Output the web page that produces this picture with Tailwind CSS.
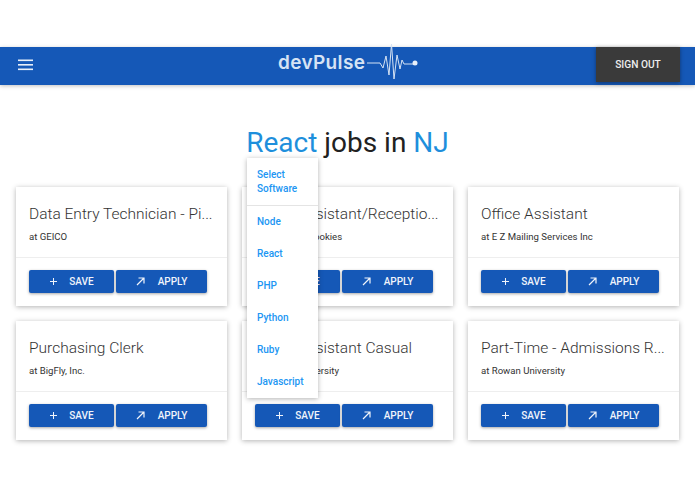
<!DOCTYPE html>
<html lang="en">
<head>
  <meta charset="UTF-8">
  <title>devPulse</title>
  <meta name="viewport" content="width=device-width, initial-scale=1.0">
  <script src="https://cdn.jsdelivr.net/npm/@tailwindcss/browser@4"></script>
</head>
<body class="bg-white font-['Roboto',sans-serif] text-[#212121] overflow-hidden">
  <div class="relative h-[494px] w-[695px] pt-[47px]">
    <!-- Header -->
    <header class="relative flex h-[38px] items-center justify-between bg-[#1558b7] pl-[18px] pr-[15px] shadow-[0_1px_4px_rgba(0,0,0,0.25)]">
      <svg class="mt-[-2px] h-[12px] w-[15px]" viewBox="0 0 15 12" fill="#e8eff9">
        <rect y="0.500" width="15" height="1.600"/>
        <rect y="5" width="15" height="1.600"/>
        <rect y="9.500" width="15" height="1.600"/>
      </svg>
      <div class="absolute left-[278px] top-[-4px] flex items-center">
        <span class="font-['Inter',sans-serif] text-[19px] font-semibold leading-[34px] tracking-[0.35px] text-[#d6e3f4]">devPulse</span>
        <svg class="ml-[2px] h-[40px] w-[52px]" viewBox="0 0 52 40" fill="none" stroke="#d6e3f4" stroke-width="1">
          <path d="M0 20H13L16 25L19 13L22 32L24.500 1L27 36L30 12L33 26L35 17L37 21H48"/>
          <circle cx="48" cy="20" r="2.500" fill="#e8eff9" stroke="none"/>
        </svg>
      </div>
      <button class="flex h-[35px] w-[84px] items-center justify-center self-start bg-[#3a3a3a] text-[10.200px] font-medium text-[#eeeeee] shadow-[0_1px_4px_rgba(0,0,0,0.4)]">SIGN OUT</button>
    </header>

    <!-- Heading -->
    <h1 class="mt-[40px] text-center text-[28px] leading-[36px]"><span class="text-[#1e8fdc]">React</span> jobs in <span class="text-[#1e8fdc]">NJ</span></h1>

    <!-- Job cards -->
    <main class="mt-[26px] grid grid-cols-3 gap-[15px] px-[16px]">
      <article class="h-[119px] bg-white shadow-[0_1px_5px_rgba(0,0,0,0.3)]">
        <div class="h-[71px] border-b border-[#eeeeee] px-[13px] pt-[17px]">
          <h2 class="truncate text-[15.500px] font-light leading-[21px] text-[#333333]">Data Entry Technician - Pi...</h2>
          <p class="mt-[5px] text-[9.600px] leading-[14px] text-[#333333]">at GEICO</p>
        </div>
        <div class="flex gap-[2px] pl-[13px] pt-[12px]">
          <button class="flex h-[23px] w-[85px] items-center justify-center gap-[11px] rounded-[2px] bg-[#1558b7] text-[10px] font-medium text-[#f0f4fb] shadow-[0_1px_3px_rgba(0,0,0,0.35)]">
            <svg class="h-[9px] w-[9px]" viewBox="0 0 9 9" stroke="#f0f4fb" stroke-width="1"><path d="M4.500 1V8M1 4.500H8"/></svg>SAVE
          </button>
          <button class="flex h-[23px] w-[91px] items-center justify-center gap-[13px] rounded-[2px] bg-[#1558b7] text-[10px] font-medium text-[#f0f4fb] shadow-[0_1px_3px_rgba(0,0,0,0.35)]">
            <svg class="h-[9px] w-[9px]" viewBox="0 0 9 9" fill="none" stroke="#f0f4fb" stroke-width="1.200"><path d="M1 8L8 1M2.500 1H8V6.500"/></svg>APPLY
          </button>
        </div>
      </article>

      <article class="h-[119px] bg-white shadow-[0_1px_5px_rgba(0,0,0,0.3)]">
        <div class="h-[71px] border-b border-[#eeeeee] px-[13px] pt-[17px]">
          <h2 class="truncate text-[15.500px] font-light leading-[21px] text-[#333333]">Office Assistant/Receptio...</h2>
          <p class="mt-[5px] text-[9.600px] leading-[14px] text-[#333333]">at Insomnia Cookies</p>
        </div>
        <div class="flex gap-[2px] pl-[13px] pt-[12px]">
          <button class="flex h-[23px] w-[85px] items-center justify-center gap-[11px] rounded-[2px] bg-[#1558b7] text-[10px] font-medium text-[#f0f4fb] shadow-[0_1px_3px_rgba(0,0,0,0.35)]">
            <svg class="h-[9px] w-[9px]" viewBox="0 0 9 9" stroke="#f0f4fb" stroke-width="1"><path d="M4.500 1V8M1 4.500H8"/></svg>SAVE
          </button>
          <button class="flex h-[23px] w-[91px] items-center justify-center gap-[13px] rounded-[2px] bg-[#1558b7] text-[10px] font-medium text-[#f0f4fb] shadow-[0_1px_3px_rgba(0,0,0,0.35)]">
            <svg class="h-[9px] w-[9px]" viewBox="0 0 9 9" fill="none" stroke="#f0f4fb" stroke-width="1.200"><path d="M1 8L8 1M2.500 1H8V6.500"/></svg>APPLY
          </button>
        </div>
      </article>

      <article class="h-[119px] bg-white shadow-[0_1px_5px_rgba(0,0,0,0.3)]">
        <div class="h-[71px] border-b border-[#eeeeee] px-[13px] pt-[17px]">
          <h2 class="truncate text-[15.500px] font-light leading-[21px] text-[#333333]">Office Assistant</h2>
          <p class="mt-[5px] text-[9.600px] leading-[14px] text-[#333333]">at E Z Mailing Services Inc</p>
        </div>
        <div class="flex gap-[2px] pl-[13px] pt-[12px]">
          <button class="flex h-[23px] w-[85px] items-center justify-center gap-[11px] rounded-[2px] bg-[#1558b7] text-[10px] font-medium text-[#f0f4fb] shadow-[0_1px_3px_rgba(0,0,0,0.35)]">
            <svg class="h-[9px] w-[9px]" viewBox="0 0 9 9" stroke="#f0f4fb" stroke-width="1"><path d="M4.500 1V8M1 4.500H8"/></svg>SAVE
          </button>
          <button class="flex h-[23px] w-[91px] items-center justify-center gap-[13px] rounded-[2px] bg-[#1558b7] text-[10px] font-medium text-[#f0f4fb] shadow-[0_1px_3px_rgba(0,0,0,0.35)]">
            <svg class="h-[9px] w-[9px]" viewBox="0 0 9 9" fill="none" stroke="#f0f4fb" stroke-width="1.200"><path d="M1 8L8 1M2.500 1H8V6.500"/></svg>APPLY
          </button>
        </div>
      </article>

      <article class="h-[119px] bg-white shadow-[0_1px_5px_rgba(0,0,0,0.3)]">
        <div class="h-[71px] border-b border-[#eeeeee] px-[13px] pt-[17px]">
          <h2 class="truncate text-[15.500px] font-light leading-[21px] text-[#333333]">Purchasing Clerk</h2>
          <p class="mt-[5px] text-[9.600px] leading-[14px] text-[#333333]">at BigFly, Inc.</p>
        </div>
        <div class="flex gap-[2px] pl-[13px] pt-[12px]">
          <button class="flex h-[23px] w-[85px] items-center justify-center gap-[11px] rounded-[2px] bg-[#1558b7] text-[10px] font-medium text-[#f0f4fb] shadow-[0_1px_3px_rgba(0,0,0,0.35)]">
            <svg class="h-[9px] w-[9px]" viewBox="0 0 9 9" stroke="#f0f4fb" stroke-width="1"><path d="M4.500 1V8M1 4.500H8"/></svg>SAVE
          </button>
          <button class="flex h-[23px] w-[91px] items-center justify-center gap-[13px] rounded-[2px] bg-[#1558b7] text-[10px] font-medium text-[#f0f4fb] shadow-[0_1px_3px_rgba(0,0,0,0.35)]">
            <svg class="h-[9px] w-[9px]" viewBox="0 0 9 9" fill="none" stroke="#f0f4fb" stroke-width="1.200"><path d="M1 8L8 1M2.500 1H8V6.500"/></svg>APPLY
          </button>
        </div>
      </article>

      <article class="h-[119px] bg-white shadow-[0_1px_5px_rgba(0,0,0,0.3)]">
        <div class="h-[71px] border-b border-[#eeeeee] px-[13px] pt-[17px]">
          <h2 class="truncate text-[15.500px] font-light leading-[21px] text-[#333333]">Office Assistant Casual</h2>
          <p class="mt-[5px] text-[9.600px] leading-[14px] text-[#333333]">at Rowan University</p>
        </div>
        <div class="flex gap-[2px] pl-[13px] pt-[12px]">
          <button class="flex h-[23px] w-[85px] items-center justify-center gap-[11px] rounded-[2px] bg-[#1558b7] text-[10px] font-medium text-[#f0f4fb] shadow-[0_1px_3px_rgba(0,0,0,0.35)]">
            <svg class="h-[9px] w-[9px]" viewBox="0 0 9 9" stroke="#f0f4fb" stroke-width="1"><path d="M4.500 1V8M1 4.500H8"/></svg>SAVE
          </button>
          <button class="flex h-[23px] w-[91px] items-center justify-center gap-[13px] rounded-[2px] bg-[#1558b7] text-[10px] font-medium text-[#f0f4fb] shadow-[0_1px_3px_rgba(0,0,0,0.35)]">
            <svg class="h-[9px] w-[9px]" viewBox="0 0 9 9" fill="none" stroke="#f0f4fb" stroke-width="1.200"><path d="M1 8L8 1M2.500 1H8V6.500"/></svg>APPLY
          </button>
        </div>
      </article>

      <article class="h-[119px] bg-white shadow-[0_1px_5px_rgba(0,0,0,0.3)]">
        <div class="h-[71px] border-b border-[#eeeeee] px-[13px] pt-[17px]">
          <h2 class="truncate text-[15.500px] font-light leading-[21px] text-[#333333]">Part-Time - Admissions R...</h2>
          <p class="mt-[5px] text-[9.600px] leading-[14px] text-[#333333]">at Rowan University</p>
        </div>
        <div class="flex gap-[2px] pl-[13px] pt-[12px]">
          <button class="flex h-[23px] w-[85px] items-center justify-center gap-[11px] rounded-[2px] bg-[#1558b7] text-[10px] font-medium text-[#f0f4fb] shadow-[0_1px_3px_rgba(0,0,0,0.35)]">
            <svg class="h-[9px] w-[9px]" viewBox="0 0 9 9" stroke="#f0f4fb" stroke-width="1"><path d="M4.500 1V8M1 4.500H8"/></svg>SAVE
          </button>
          <button class="flex h-[23px] w-[91px] items-center justify-center gap-[13px] rounded-[2px] bg-[#1558b7] text-[10px] font-medium text-[#f0f4fb] shadow-[0_1px_3px_rgba(0,0,0,0.35)]">
            <svg class="h-[9px] w-[9px]" viewBox="0 0 9 9" fill="none" stroke="#f0f4fb" stroke-width="1.200"><path d="M1 8L8 1M2.500 1H8V6.500"/></svg>APPLY
          </button>
        </div>
      </article>
    </main>

    <!-- Software dropdown -->
    <ul class="absolute left-[247px] top-[158px] h-[240px] w-[71px] bg-white text-[10px] font-medium leading-[14px] text-[#2196f3] shadow-[0_1px_5px_rgba(0,0,0,0.3)]">
      <li class="h-[48px] border-b border-[#e4e4e4] px-[10px] pt-[10px]">Select Software</li>
      <li class="flex h-[32px] items-center px-[10px]">Node</li>
      <li class="flex h-[32px] items-center px-[10px]">React</li>
      <li class="flex h-[32px] items-center px-[10px]">PHP</li>
      <li class="flex h-[32px] items-center px-[10px]">Python</li>
      <li class="flex h-[32px] items-center px-[10px]">Ruby</li>
      <li class="flex h-[32px] items-center px-[10px]">Javascript</li>
    </ul>
  </div>
</body>
</html>
